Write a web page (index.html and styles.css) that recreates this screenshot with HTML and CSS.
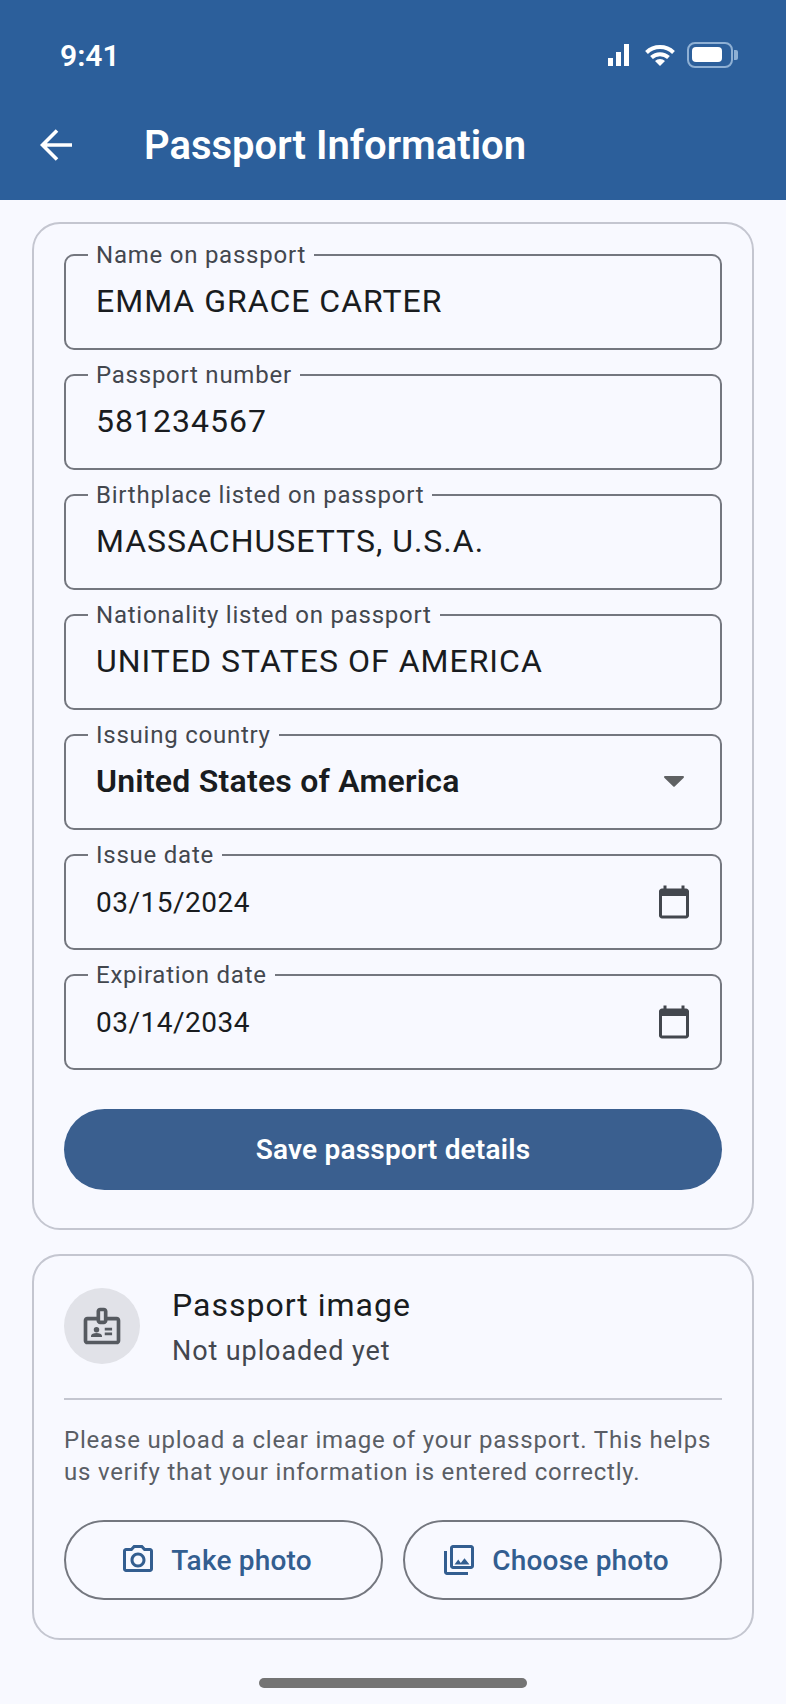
FILE: index.html
```html
<!DOCTYPE html>
<html lang="en">
<head>
  <meta charset="UTF-8" />
  <meta name="viewport" content="width=device-width, initial-scale=1.0"/>
  <title>Passport Information</title>
  <link rel="stylesheet" href="styles.css">
</head>
<body>
  <header class="top">
    <div class="status">
      <span class="time">9:41</span>
      <div class="status-icons">
        <svg class="sig" width="22" height="22" viewBox="0 0 22 22"><rect x="0" y="14" width="5" height="8" fill="#fff"/><rect x="8" y="8" width="5" height="14" fill="#fff"/><rect x="16" y="0" width="5" height="22" fill="#fff"/></svg>
        <svg class="wifi" width="30" height="21" viewBox="0 0 30 21"><path d="M1.5 7.5a19.5 19.5 0 0 1 27 0M6.5 12.5a12.5 12.5 0 0 1 17 0" fill="none" stroke="#fff" stroke-width="4"/><path d="M15 21l-5-5a7 7 0 0 1 10 0z" fill="#fff"/></svg>
        <div class="battery"><div class="battery-fill"></div></div>
        <div class="battery-nub"></div>
      </div>
    </div>
    <div class="appbar">
      <svg class="back" width="34" height="34" viewBox="0 0 34 34"><path d="M32 17H3M17 2.500L2.500 17 17 31.500" fill="none" stroke="#fff" stroke-width="3.600"/></svg>
      <h1>Passport Information</h1>
    </div>
  </header>

  <main class="content">
    <section class="card form-card">
      <fieldset class="field"><legend>Name on passport</legend><div class="row"><span class="value">EMMA GRACE CARTER</span></div></fieldset>
      <fieldset class="field"><legend>Passport number</legend><div class="row"><span class="value">581234567</span></div></fieldset>
      <fieldset class="field"><legend>Birthplace listed on passport</legend><div class="row"><span class="value">MASSACHUSETTS, U.S.A.</span></div></fieldset>
      <fieldset class="field"><legend>Nationality listed on passport</legend><div class="row"><span class="value">UNITED STATES OF AMERICA</span></div></fieldset>
      <fieldset class="field"><legend>Issuing country</legend><div class="row"><span class="value strong">United States of America</span><svg class="caret" width="20" height="11" viewBox="0 0 20 11"><path d="M1 0h18a1 1 0 0 1 .7 1.700L10.700 10.500a1 1 0 0 1-1.400 0L.3 1.700A1 1 0 0 1 1 0z" fill="#5f6163"/></svg></div></fieldset>
      <fieldset class="field"><legend>Issue date</legend><div class="row"><span class="value date">03/15/2024</span><svg class="cal" width="36" height="36" viewBox="0 0 24 24"><path d="M20 3h-1V1h-2v2H7V1H5v2H4c-1.100 0-2 .9-2 2v16c0 1.100.9 2 2 2h16c1.100 0 2-.9 2-2V5c0-1.100-.9-2-2-2zm0 18H4V8h16v13z" fill="#43474e"/></svg></div></fieldset>
      <fieldset class="field"><legend>Expiration date</legend><div class="row"><span class="value date">03/14/2034</span><svg class="cal" width="36" height="36" viewBox="0 0 24 24"><path d="M20 3h-1V1h-2v2H7V1H5v2H4c-1.100 0-2 .9-2 2v16c0 1.100.9 2 2 2h16c1.100 0 2-.9 2-2V5c0-1.100-.9-2-2-2zm0 18H4V8h16v13z" fill="#43474e"/></svg></div></fieldset>
      <button class="save">Save passport details</button>
    </section>

    <section class="card image-card">
      <div class="image-head">
        <div class="avatar">
          <svg width="44" height="44" viewBox="0 0 24 24" fill="#565a60"><path d="M20 7h-5V4c0-1.100-.9-2-2-2h-2c-1.100 0-2 .9-2 2v3H4c-1.100 0-2 .9-2 2v11c0 1.100.9 2 2 2h16c1.100 0 2-.9 2-2V9c0-1.100-.9-2-2-2zM11 4h2v5h-2V4zm9 16H4V9h5c0 1.100.9 2 2 2h2c1.100 0 2-.9 2-2h5v11z"/><circle cx="9" cy="14" r="1.500"/><path d="M11.080 16.180c-.64-.28-1.340-.43-2.080-.43s-1.440.15-2.080.43C6.360 16.420 6 16.960 6 17.570V18h6v-.43c0-.61-.36-1.150-.92-1.390zM13.500 13h4v1.500h-4zM13.500 15.500h4V17h-4z"/></svg>
        </div>
        <div class="image-text">
          <div class="image-title">Passport image</div>
          <div class="image-sub">Not uploaded yet</div>
        </div>
      </div>
      <div class="divider"></div>
      <p class="help">Please upload a clear image of your passport. This helps us verify that your information is entered correctly.</p>
      <div class="actions">
        <button class="outline">
          <svg width="36" height="36" viewBox="0 0 24 24" fill="#335e90"><path d="M20 4h-3.170L15 2H9L7.170 4H4c-1.100 0-2 .9-2 2v12c0 1.100.9 2 2 2h16c1.100 0 2-.9 2-2V6c0-1.100-.9-2-2-2zm0 14H4V6h4.050l1.830-2h4.240l1.830 2H20v12zM12 7c-2.760 0-5 2.240-5 5s2.240 5 5 5 5-2.240 5-5-2.240-5-5-5zm0 8c-1.650 0-3-1.350-3-3s1.350-3 3-3 3 1.350 3 3-1.350 3-3 3z"/></svg>
          Take photo
        </button>
        <button class="outline">
          <svg width="36" height="36" viewBox="0 0 24 24" fill="#335e90"><path d="M20 4v12H8V4h12m0-2H8c-1.100 0-2 .9-2 2v12c0 1.100.9 2 2 2h12c1.100 0 2-.9 2-2V4c0-1.100-.9-2-2-2zm-8.500 9.670l1.690 2.260 2.480-3.100L19 15H9zM2 6v14c0 1.100.9 2 2 2h14v-2H4V6H2z"/></svg>
          Choose photo
        </button>
      </div>
    </section>
    <div class="home-bar"></div>
  </main>
</body>
</html>
```

FILE: styles.css
```css
* { box-sizing: border-box; }
body {
  margin: 0;
  height: 1704px;
  overflow: hidden;
  background: #f8f9ff;
  font-family: Roboto, "Noto Sans", sans-serif;
  color: #191c20;
}

/* header */
.top {
  height: 200px;
  background: #2c5f9b;
  color: #fff;
}
.status {
  height: 110px;
  padding: 0 48px 0 60px;
  display: flex;
  justify-content: space-between;
  align-items: center;
}
.time {
  font-size: 30px;
  font-weight: 600;
}
.status-icons {
  display: flex;
  align-items: center;
}
.sig { margin-right: 15px; }
.wifi { margin-right: 12px; }
.battery {
  width: 46px;
  height: 26px;
  border: 2px solid #8fb0d4;
  border-radius: 8px;
  padding: 3px 9px 4px 3px;
}
.battery-fill {
  height: 100%;
  background: #fff;
  border-radius: 4px;
}
.battery-nub {
  width: 4px;
  height: 10px;
  margin-left: 1px;
  background: #8fb0d4;
  border-radius: 0 2px 2px 0;
}
.appbar {
  display: flex;
  align-items: center;
  padding: 0 0 0 40px;
  height: 70px;
}
.appbar h1 {
  margin: 0 0 0 70px;
  font-size: 40px;
  font-weight: 600;
}

/* cards */
.content {
  padding: 22px 32px 0;
}
.card {
  border: 2px solid #c4c6d0;
  border-radius: 28px;
  padding: 0 30px;
}
.form-card {
  height: 1008px;
  padding-top: 19px;
  display: flex;
  flex-direction: column;
  gap: 13px;
}
.field {
  margin: 0;
  height: 107px;
  min-width: 0;
  padding: 0 29px 0 30px;
  border: 2px solid #74777f;
  border-radius: 10px;
}
.field legend {
  padding: 0 8px;
  margin-left: -8px;
  font-size: 24px;
  line-height: 24px;
  letter-spacing: 0.76px;
  color: #43474e;
}
.row {
  height: 69px;
  display: flex;
  justify-content: space-between;
  align-items: center;
}
.value {
  font-size: 32px;
  letter-spacing: 1px;
  padding-bottom: 2px;
}
.strong { font-weight: 600; letter-spacing: 0.23px; }
.date { font-size: 28px; letter-spacing: 0.5px; padding: 2px 0 0; }
.caret { margin-right: 7px; }
.cal { margin-right: -1px; }
.save {
  margin-top: 26px;
  height: 81px;
  border: 0;
  border-radius: 41px;
  background: #3a5f8f;
  color: #fff;
  font: 600 28px Roboto, sans-serif;
  letter-spacing: 0.2px;
}

.image-card {
  height: 386px;
  margin-top: 24px;
  padding-top: 22px;
}
.image-head {
  display: flex;
  align-items: center;
  gap: 32px;
}
.avatar {
  width: 76px;
  height: 76px;
  border-radius: 50%;
  background: #e1e2e8;
  display: flex;
  align-items: center;
  justify-content: center;
}
.image-text { padding-top: 4px; }
.image-title {
  font-size: 32px;
  line-height: 47px;
  letter-spacing: 1px;
}
.image-sub {
  font-size: 27px;
  line-height: 45px;
  letter-spacing: 0.9px;
  color: #43474e;
}
.divider {
  height: 2px;
  margin-top: 24px;
  background: #c4c6d0;
}
.help {
  margin: 24px 0 0;
  font-size: 24px;
  line-height: 32px;
  letter-spacing: 0.8px;
  color: #5a5e65;
}
.actions {
  display: flex;
  gap: 20px;
  margin-top: 32px;
}
.outline {
  flex: 1;
  height: 80px;
  padding: 0 15px 0 0;
  border: 2px solid #74777f;
  border-radius: 40px;
  background: transparent;
  color: #335e90;
  font: 500 28px Roboto, sans-serif;
  letter-spacing: 0.2px;
  display: flex;
  align-items: center;
  justify-content: center;
  gap: 15px;
}

.home-bar {
  width: 268px;
  height: 10px;
  margin: 38px auto 0;
  border-radius: 5px;
  background: #747474;
}
```
